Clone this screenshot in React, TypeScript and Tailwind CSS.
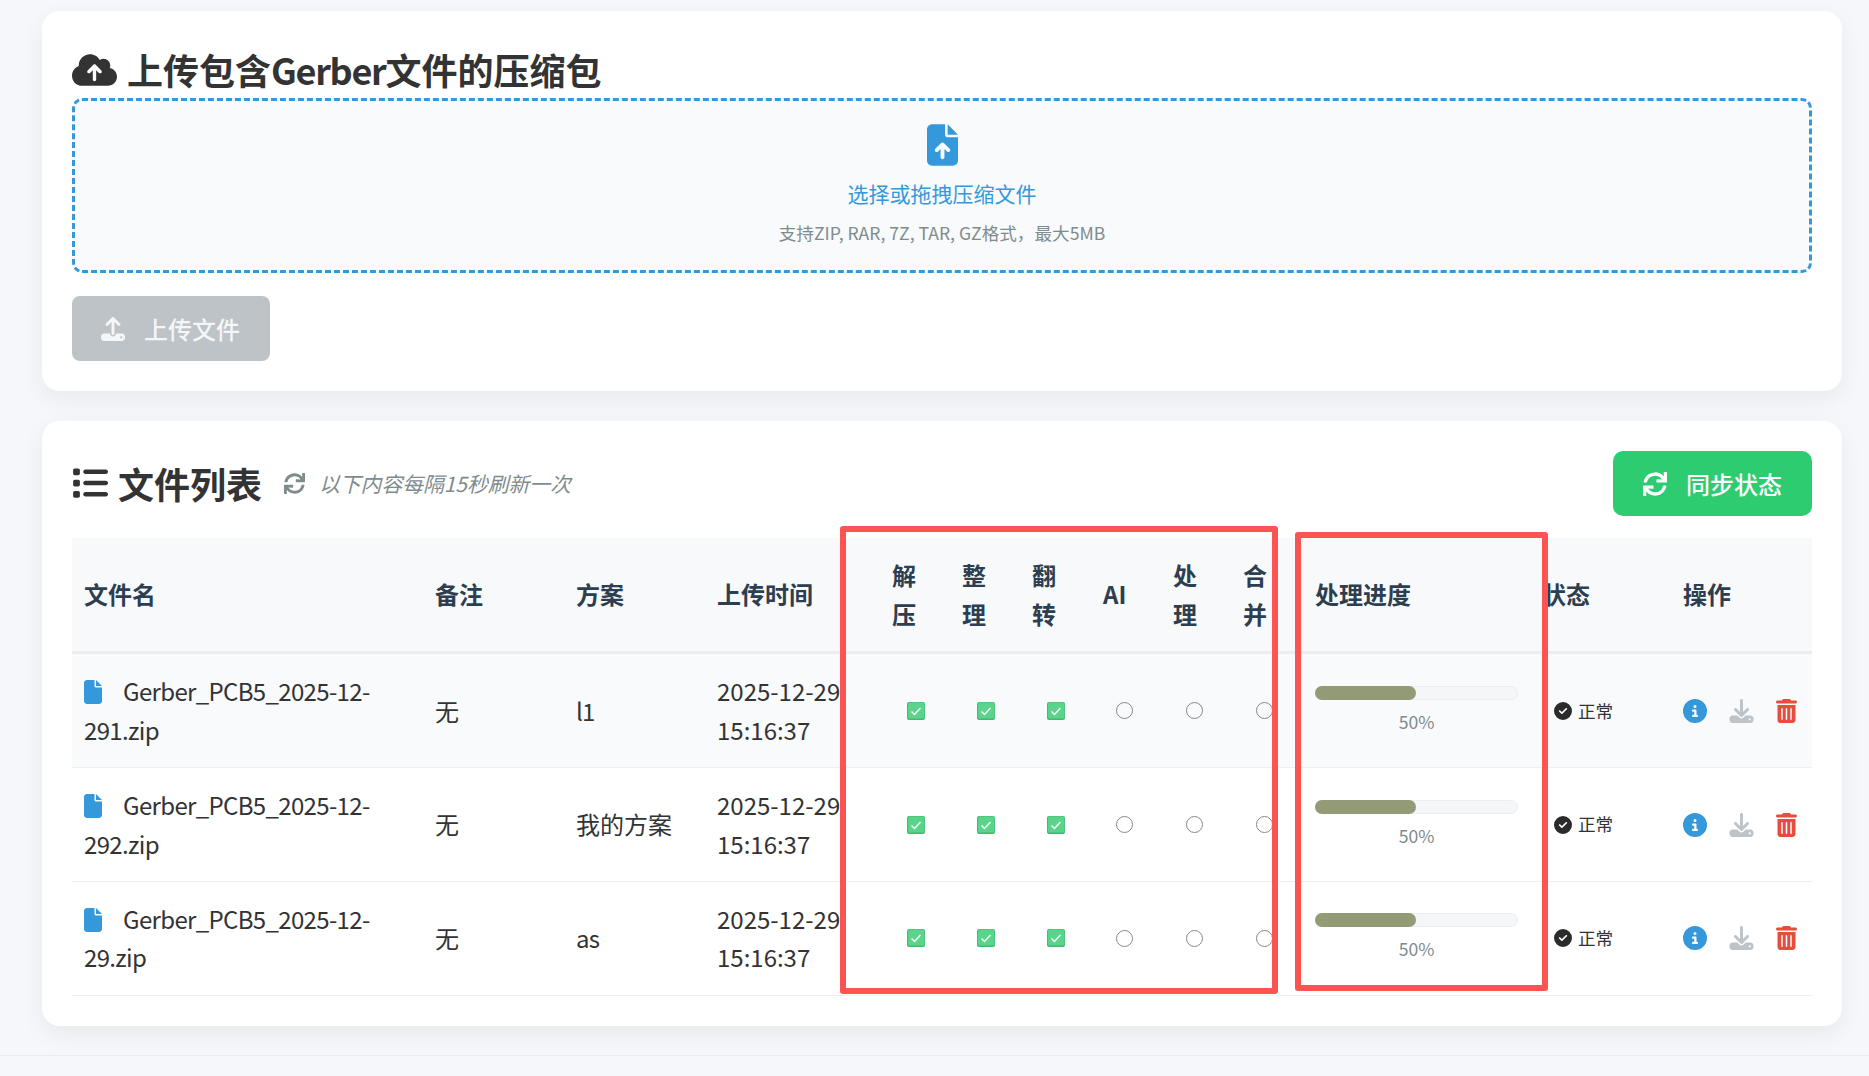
import { FaSync } from "react-icons/fa";
import {
  FaCircleCheck,
  FaCircleInfo,
  FaCloudArrowUp,
  FaDownload,
  FaFile,
  FaFileArrowUp,
  FaList,
  FaTrashCan,
  FaUpload,
} from "react-icons/fa6";

const files = [
  { name: "Gerber_PCB5_2025-12-291.zip", plan: "l1", planClass: "tracking-[-0.8px]", active: true },
  { name: "Gerber_PCB5_2025-12-292.zip", plan: "我的方案", planClass: "", active: false },
  { name: "Gerber_PCB5_2025-12-29.zip", plan: "as", planClass: "tracking-[-0.8px]", active: false },
];

const stepHeads = ["解压", "整理", "翻转", "AI", "处理", "合并"];

function DoneBox() {
  return (
    <svg viewBox="0 0 18 18" className="ml-[27px] block h-[18px] w-[18px]">
      <rect x="0" y="0" width="18" height="18" rx="2" fill="#45b873" />
      <rect x="1" y="0.5" width="16.5" height="16" rx="1.5" fill="#5ad48b" />
      <path d="M4.5 9.5 L7.5 12.5 L13.5 6" fill="none" stroke="#f4fff8" strokeWidth="1.5" />
    </svg>
  );
}

function EmptyCircle() {
  return <div className="ml-[25px] h-[17px] w-[17px] rounded-full border border-[#85888c]" />;
}

function FileRow({ file }: { file: (typeof files)[number] }) {
  return (
    <tr className={`border-b border-[#ecf0f1] ${file.active ? "bg-[#f8fafc]" : "bg-white"}`}>
      <td className="p-[18px_12px] tracking-[-0.65px] text-[#333]">
        <FaFile className="mr-[21px] inline-block h-6 w-[18px] align-[-3px] text-[#3498db]" />
        {file.name}
      </td>
      <td className="p-[18px_12px]">无</td>
      <td className={`p-[18px_12px] ${file.planClass}`}>{file.plan}</td>
      <td className="whitespace-nowrap p-[18px_0_18px_12px]">
        2025-12-29
        <br />
        15:16:37
      </td>
      <td><DoneBox /></td>
      <td><DoneBox /></td>
      <td><DoneBox /></td>
      <td><EmptyCircle /></td>
      <td><EmptyCircle /></td>
      <td><EmptyCircle /></td>
      <td className="px-3">
        <div className="h-[14px] rounded-full border border-[#eceef1] bg-[#f4f6f8]">
          <div className="-m-px h-[14px] w-1/2 rounded-full bg-[#939a76]" />
        </div>
        <div className="mt-[8px] text-center text-[17.6px] leading-[28px] text-[#7f8c8d]">50%</div>
      </td>
      <td className="px-3">
        <div className="flex items-center pl-3 text-[17.6px] text-[#333]">
          <FaCircleCheck className="mr-[6px] h-[18px] w-[18px] text-[#2b2b2b]" />
          正常
        </div>
      </td>
      <td className="px-3">
        <div className="flex items-center">
          <FaCircleInfo className="h-6 w-6 text-[#3498db]" />
          <FaDownload className="ml-[22px] h-6 w-[25px] text-[#bdc3c7]" />
          <FaTrashCan className="ml-[22px] h-6 w-[21px] text-[#e74c3c]" />
        </div>
      </td>
    </tr>
  );
}

export default function App() {
  return (
    <div className="relative h-[1076px] overflow-hidden bg-[#f5f7fa] pt-[11px] font-['Noto_Sans_CJK_SC','Noto_Sans',sans-serif] text-[24px] leading-[1.6] text-[#333]">
      <div className="ml-[42px] w-[1800px]">
        <section className="rounded-[18px] bg-white p-[30px] shadow-[0_8px_24px_rgba(0,0,0,0.06)]">
          <h2 className="flex items-center whitespace-pre text-[36px] font-bold leading-[57px] text-[#333]">
            <FaCloudArrowUp className="mr-[10px] h-[36px] w-[45px]" />
            <span>
              上传包含<span className="tracking-[-1.3px]">Gerber</span>文件的压缩包
            </span>
          </h2>
          <div className="flex flex-col items-center rounded-[10px] border-[3px] border-dashed border-[#3498db] bg-[#f8fafc] pb-[22.7px] pt-[23px]">
            <FaFileArrowUp className="h-[42px] w-[31px] text-[#3498db]" />
            <div className="mt-[11px] text-[21px] leading-[33.3px] text-[#3498db]">选择或拖拽压缩文件</div>
            <div className="mt-[9px] text-[17.6px] leading-[28px] text-[#7f8c8d]">支持ZIP, RAR, 7Z, TAR, GZ格式，最大5MB</div>
          </div>
          <button
            type="button"
            className="mt-[23px] flex h-[65px] w-[198px] items-center rounded-[8px] bg-[#bdc3c7] pl-[29px] pt-[2px] font-medium text-[#f4f6f7]"
          >
            <FaUpload className="mr-[19px] h-6 w-6" />
            上传文件
          </button>
        </section>

        <section className="mt-[30px] rounded-[18px] bg-white p-[30px] pb-[30px] shadow-[0_8px_24px_rgba(0,0,0,0.06)]">
          <div className="mb-[22px] flex h-[65px] items-center justify-between">
            <div className="flex items-center">
              <h2 className="flex items-center text-[36px] font-bold leading-[57px] text-[#333]">
                <FaList className="mr-[10px] h-[36px] w-[36px]" />
                文件列表
              </h2>
              <FaSync className="ml-[22px] h-[21px] w-[21px] text-[#7f8c8d]" />
              <span className="ml-[14px] text-[20.8px] italic text-[#7f8c8d]">以下内容每隔15秒刷新一次</span>
            </div>
            <button
              type="button"
              className="flex h-[65px] w-[199px] items-center rounded-[10px] bg-[#2ecc71] pl-[30px] pt-[2px] font-medium text-white"
            >
              <FaSync className="mr-[19px] h-6 w-6" />
              同步状态
            </button>
          </div>

          <table className="w-full table-fixed border-collapse text-left">
            <colgroup>
              <col className="w-[351px]" />
              <col className="w-[141px]" />
              <col className="w-[141px]" />
              <col className="w-[175px]" />
              <col className="w-[70px]" />
              <col className="w-[70px]" />
              <col className="w-[71px]" />
              <col className="w-[70px]" />
              <col className="w-[70px]" />
              <col className="w-[72px]" />
              <col className="w-[227px]" />
              <col className="w-[141px]" />
              <col className="w-[141px]" />
            </colgroup>
            <thead>
              <tr className="border-b-[3px] border-[#ecedef] bg-[#f8f9fa] text-[#2c3e50]">
                <th className="p-[18.3px_12px] font-semibold">文件名</th>
                <th className="p-[18.3px_12px] font-semibold">备注</th>
                <th className="p-[18.3px_12px] font-semibold">方案</th>
                <th className="p-[18.3px_12px] font-semibold">上传时间</th>
                {stepHeads.map((head) => (
                  <th key={head} className="p-[18.3px_13px_18.3px_12px] font-semibold">
                    {head}
                  </th>
                ))}
                <th className="p-[18.3px_12px] font-semibold">处理进度</th>
                <th className="p-[18.3px_12px] font-semibold">状态</th>
                <th className="p-[18.3px_12px] font-semibold">操作</th>
              </tr>
            </thead>
            <tbody>
              {files.map((file) => (
                <FileRow key={file.name} file={file} />
              ))}
            </tbody>
          </table>
        </section>

        <div className="absolute left-0 right-0 top-[1055px] h-px bg-[#e9ecef]" />
      </div>

      {/* red annotation boxes drawn over the table */}
      <div className="absolute left-[840px] top-[526px] h-[468px] w-[438px] rounded-[3px] border-[6px] border-[#fd5353]" />
      <div className="absolute left-[1295px] top-[532px] h-[459px] w-[253px] rounded-[3px] border-[6px] border-[#fd5353]" />
    </div>
  );
}
